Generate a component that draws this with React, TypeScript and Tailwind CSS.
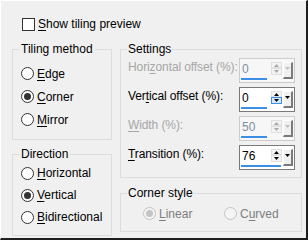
import React from 'react';

type Mnemonic = {
	pre?: string;
	k: string;
	post: string;
};

function Label({ pre = '', k, post }: Mnemonic) {
	return (
		<span>
			{pre}
			<u className="underline-offset-[2px]">{k}</u>
			{post}
		</span>
	);
}

function Radio({
	text,
	checked,
	disabled,
}: {
	text: Mnemonic;
	checked?: boolean;
	disabled?: boolean;
}) {
	return (
		<div
			className={`flex items-center gap-[3px] ${
				disabled ? 'text-[#7e7e7e]' : 'text-black'
			}`}
		>
			<div
				className={`w-[13px] h-[13px] rounded-full border flex items-center justify-center ${
					disabled
						? 'border-[#c4c4c4] bg-[#f4f4f4]'
						: 'border-[#333] bg-white'
				}`}
			>
				{checked && (
					<div
						className={`w-[7px] h-[7px] rounded-full ${
							disabled ? 'bg-[#c4c4c4]' : 'bg-[#333]'
						}`}
					/>
				)}
			</div>
			<Label {...text} />
		</div>
	);
}

function Tri({ up, color }: { up?: boolean; color: string }) {
	return (
		<svg width="5" height="3" viewBox="0 0 5 3">
			<polygon
				points={up ? '0,3 5,3 2.5,0' : '0,0 5,0 2.5,3'}
				fill={color}
			/>
		</svg>
	);
}

function Spin({
	value,
	bar,
	disabled,
	hot,
}: {
	value: string;
	bar: number;
	disabled?: boolean;
	hot?: boolean;
}) {
	const arrow = disabled ? '#a8a8a8' : '#000';

	return (
		<div
			className={`w-[56px] h-[25px] border flex ${
				disabled
					? 'border-[#cccccc] bg-[#f7f7f7]'
					: 'border-[#7a7a7a] bg-white'
			}`}
		>
			<div className="w-[31px] flex flex-col">
				<div
					className={`h-[19px] pl-[2px] pt-[2px] leading-[16px] ${
						disabled ? 'text-[#7d8ea3]' : 'text-black'
					}`}
				>
					{value}
				</div>
				<div
					className="h-[2px] ml-[1px] bg-[#3d8fe6]"
					style={{ width: bar }}
				/>
			</div>
			<div className="w-[11px] mt-[3px] h-[13px] flex flex-col">
				<div className="h-[6px] flex items-center justify-center border border-[#e0e0e0] bg-[#f3f3f3]">
					<Tri up color={arrow} />
				</div>
				<div
					className={`h-[7px] flex items-center justify-center border ${
						hot
							? 'border-[#3d8fe6] bg-[#d5e8f8]'
							: 'border-[#e0e0e0] bg-[#f3f3f3]'
					}`}
				>
					<Tri color={arrow} />
				</div>
			</div>
			<div className="w-[10px] ml-[1px] mt-[3px] h-[17px] border-l border-t border-white border-r-[2px] border-b-[2px] border-r-[#7a7a7a] border-b-[#7a7a7a] bg-[#f0f0f0] flex justify-center pt-[4px]">
				<Tri color={disabled ? '#c0c0c0' : '#000'} />
			</div>
		</div>
	);
}

function SettingRow({
	text,
	value,
	bar,
	disabled,
	hot,
}: {
	text: Mnemonic;
	value: string;
	bar: number;
	disabled?: boolean;
	hot?: boolean;
}) {
	return (
		<div className="h-[29px] flex items-start justify-between pr-[6px]">
			<div
				className={`mt-[2px] leading-[16px] tracking-[-0.1px] ${
					disabled ? 'text-[#a6a6a6]' : 'text-black'
				}`}
			>
				<Label {...text} />
			</div>
			<div className="mt-[1px]">
				<Spin value={value} bar={bar} disabled={disabled} hot={hot} />
			</div>
		</div>
	);
}

export default function App() {
	return (
		<main className="w-[308px] h-[240px] bg-[#f0f0f0] border-t border-l border-white border-r-2 border-b-2 border-r-[#1e1e1e] border-b-[#1e1e1e] font-['Liberation_Sans',Arial,sans-serif] text-[12px] leading-[16px] text-black overflow-hidden">
			<div className="flex items-center gap-[3px] pl-[21px] pt-[15px] h-[31px]">
				<div className="w-[13px] h-[13px] border border-[#333] bg-white" />
				<Label k="S" post="how tiling preview" />
			</div>

			<div className="flex gap-[8px] pl-[11px] pt-[9px]">
				<div className="w-[100px] flex flex-col gap-[6px]">
					<fieldset className="h-[99px] border border-[#dcdcdc] pl-[6px]">
						<legend className="px-[2px] leading-[16px]">
							Tiling method
						</legend>
						<div className="pt-[5px] pl-[2px]">
							<div className="h-[23px] flex items-center">
								<Radio text={{ k: 'E', post: 'dge' }} />
							</div>
							<div className="h-[23px] flex items-center">
								<Radio text={{ k: 'C', post: 'orner' }} checked />
							</div>
							<div className="h-[23px] flex items-center">
								<Radio text={{ k: 'M', post: 'irror' }} />
							</div>
						</div>
					</fieldset>

					<fieldset className="h-[90px] border border-[#dcdcdc] pl-[6px]">
						<legend className="px-[2px] leading-[16px]">
							Direction
						</legend>
						<div className="pl-[2px]">
							<div className="h-[22px] flex items-center">
								<Radio text={{ k: 'H', post: 'orizontal' }} />
							</div>
							<div className="h-[22px] flex items-center">
								<Radio text={{ k: 'V', post: 'ertical' }} checked />
							</div>
							<div className="h-[22px] flex items-center">
								<Radio text={{ k: 'B', post: 'idirectional' }} />
							</div>
						</div>
					</fieldset>
				</div>

				<div className="w-[182px] flex flex-col gap-[7px]">
					<fieldset className="h-[137px] border border-[#dcdcdc] pl-[6px]">
						<legend className="px-[1px] leading-[16px]">Settings</legend>
						<div className="pl-[1px]">
							<SettingRow
								text={{ pre: 'Hori', k: 'z', post: 'ontal offset (%):' }}
								value="0"
								bar={26}
								disabled
							/>
							<SettingRow
								text={{ pre: 'Ver', k: 't', post: 'ical offset (%):' }}
								value="0"
								bar={26}
								hot
							/>
							<SettingRow
								text={{ k: 'W', post: 'idth (%):' }}
								value="50"
								bar={26}
								disabled
							/>
							<SettingRow
								text={{ k: 'T', post: 'ransition (%):' }}
								value="76"
								bar={40}
							/>
						</div>
					</fieldset>

					<fieldset className="h-[47px] border border-[#dcdcdc] pl-[6px]">
						<legend className="px-[1px] leading-[16px]">
							Corner style
						</legend>
						<div className="flex items-center h-[25px] pl-[16px]">
							<div className="w-[81px]">
								<Radio text={{ k: 'L', post: 'inear' }} checked disabled />
							</div>
							<Radio text={{ pre: 'C', k: 'u', post: 'rved' }} disabled />
						</div>
					</fieldset>
				</div>
			</div>
		</main>
	);
}
